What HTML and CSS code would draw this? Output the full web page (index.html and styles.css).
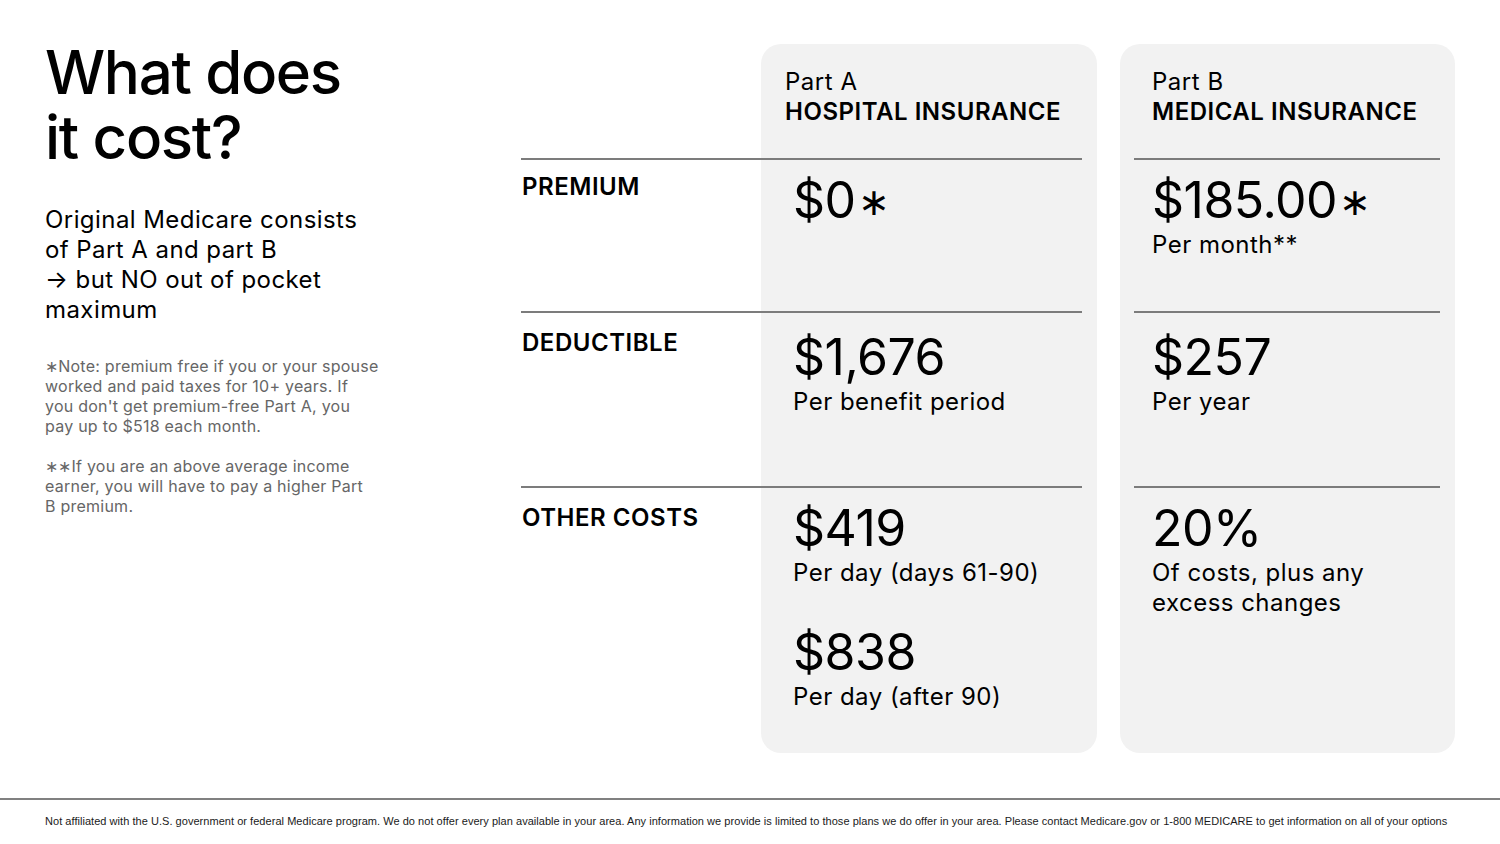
FILE: index.html
```html
<!DOCTYPE html>
<html lang="en">
<head>
<meta charset="utf-8">
<title>What does it cost?</title>
<link rel="stylesheet" href="styles.css">
</head>
<body>
<div class="page">
  <main class="main">
    <section class="intro">
      <h1 class="title">What does<br>it cost?</h1>
      <p class="lead">Original Medicare consists of Part A and part B<br>&rarr; but NO out of pocket maximum</p>
      <p class="note">&lowast;Note: premium free if you or your spouse<br>worked and paid taxes for 10+ years. If<br>you don't get premium-free Part A, you<br>pay up to $518 each month.</p>
      <p class="note">&lowast;&lowast;If you are an above average income<br>earner, you will have to pay a higher Part<br>B premium.</p>
    </section>

    <section class="table">
      <div class="card card-a"></div>
      <div class="card card-b"></div>

      <div class="head head-a">
        <div class="part">Part A</div>
        <div class="kind">HOSPITAL INSURANCE</div>
      </div>
      <div class="head head-b">
        <div class="part">Part B</div>
        <div class="kind">MEDICAL INSURANCE</div>
      </div>

      <div class="label row-premium">PREMIUM</div>
      <div class="cell cell-a row-premium">
        <div class="value">$0<span class="ast">&lowast;</span></div>
      </div>
      <div class="cell cell-b row-premium">
        <div class="value">$185.00<span class="ast">&lowast;</span></div>
        <div class="sub">Per month**</div>
      </div>

      <div class="label row-deduct">DEDUCTIBLE</div>
      <div class="cell cell-a row-deduct">
        <div class="value">$1,676</div>
        <div class="sub">Per benefit period</div>
      </div>
      <div class="cell cell-b row-deduct">
        <div class="value">$257</div>
        <div class="sub">Per year</div>
      </div>

      <div class="label row-other">OTHER COSTS</div>
      <div class="cell cell-a row-other">
        <div class="value">$419</div>
        <div class="sub">Per day (days 61-90)</div>
        <div class="value value-next">$838</div>
        <div class="sub">Per day (after 90)</div>
      </div>
      <div class="cell cell-b row-other">
        <div class="value">20%</div>
        <div class="sub">Of costs, plus any<br>excess changes</div>
      </div>
    </section>
  </main>
  <footer class="footer">Not affiliated with the U.S. government or federal Medicare program. We do not offer every plan available in your area. Any information we provide is limited to those plans we do offer in your area. Please contact Medicare.gov or 1-800 MEDICARE to get information on all of your options</footer>
</div>
</body>
</html>
```

FILE: styles.css
```css
* { box-sizing: border-box; }

html, body {
  margin: 0;
  padding: 0;
  background: #ffffff;
}

body {
  font-family: Inter, "Noto Sans", "Liberation Sans", sans-serif;
  color: #000;
  width: 1500px;
  height: 844px;
  overflow: hidden;
}

.page {
  width: 1500px;
  height: 844px;
  display: flex;
  flex-direction: column;
}

.main {
  height: 798px;
  display: flex;
  padding-left: 45px;
}

/* left column */
.intro {
  width: 476px;
  padding-top: 40px;
}

.title {
  margin: 0;
  font-size: 60px;
  line-height: 65px;
  font-weight: 500;
  letter-spacing: -0.022em;
}

.lead {
  margin: 35px 0 0;
  width: 340px;
  font-size: 24px;
  line-height: 30px;
  font-weight: 400;
  letter-spacing: 0.018em;
}

.note {
  margin: 31px 0 0;
  width: 360px;
  font-size: 16px;
  line-height: 20px;
  color: #666666;
  letter-spacing: 0.015em;
  white-space: nowrap;
}

.note + .note {
  margin-top: 20px;
}

/* table */
.table {
  margin-top: 44px;
  height: 709px;
  display: grid;
  grid-template-columns: 240px 336px 23px 335px;
  grid-template-rows: 114px 153px 175px 1fr;
}

.card {
  grid-row: 1 / -1;
  background: #f2f2f2;
  border-radius: 20px;
}

.card-a { grid-column: 2; }
.card-b { grid-column: 4; }

.head {
  grid-row: 1;
  padding-top: 23px;
  font-size: 24px;
  line-height: 30px;
  letter-spacing: 0.022em;
}

.head-a { grid-column: 2; padding-left: 24px; }
.head-b { grid-column: 4; padding-left: 32px; }

.kind {
  font-weight: 600;
}

.row-premium { grid-row: 2; }
.row-deduct { grid-row: 3; }
.row-other { grid-row: 4; }

.label,
.cell {
  border-top: 2px solid #7c7c7c;
}

.label {
  grid-column: 1;
  padding: 16px 0 0 1px;
  font-size: 24px;
  line-height: 28px;
  font-weight: 600;
  letter-spacing: 0.022em;
}

.label.row-premium { padding-top: 13px; }

.cell {
  padding-top: 10px;
}

.cell.row-deduct { padding-top: 14px; }

.cell-a {
  grid-column: 2;
  margin-right: 15px;
  padding-left: 32px;
}

.cell-b {
  grid-column: 4;
  margin: 0 15px 0 14px;
  padding-left: 18px;
}

.value {
  font-size: 50px;
  line-height: 60px;
  font-weight: 400;
  letter-spacing: -0.01em;
}

.ast {
  font-size: 0.76em;
  line-height: 0;
  margin-left: 2px;
  vertical-align: 3px;
}

.value-next {
  margin-top: 34px;
}

.sub {
  font-size: 24px;
  line-height: 30px;
  letter-spacing: 0.02em;
}

/* footer */
.footer {
  border-top: 2px solid #808080;
  padding: 15px 0 0 45px;
  font-family: "Liberation Sans", Arial, sans-serif;
  font-size: 11px;
  line-height: 13px;
  letter-spacing: 0.04px;
  color: #1a1a1a;
  white-space: nowrap;
}
```
